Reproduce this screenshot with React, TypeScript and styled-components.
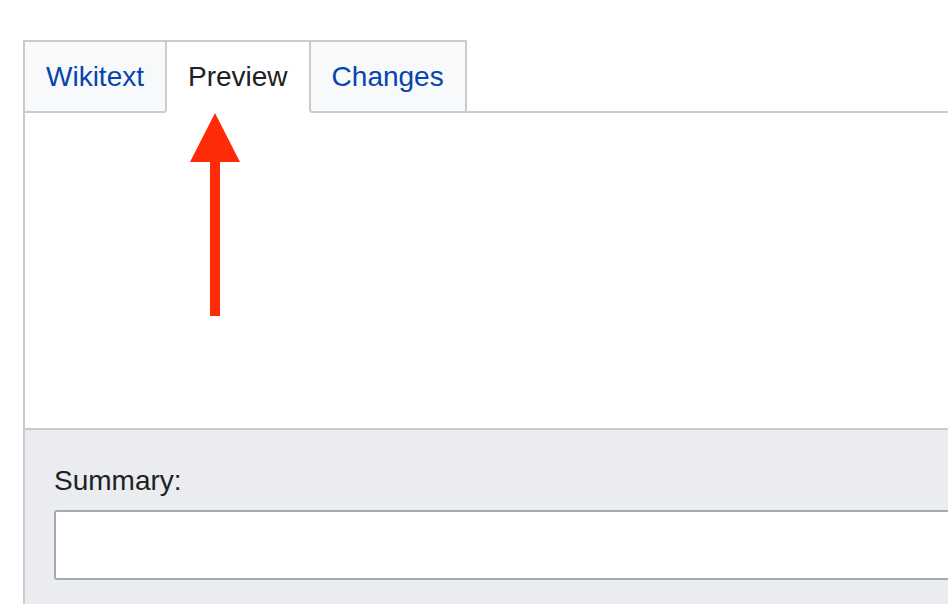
import React from "react";
import styled, { createGlobalStyle } from "styled-components";

const Global = createGlobalStyle`
  html, body {
    margin: 0;
    padding: 0;
    background: #ffffff;
    overflow: hidden;
  }
  body {
    font-family: "Liberation Sans", Arial, Helvetica, sans-serif;
  }
`;

const Page = styled.div`
  position: relative;
  width: 948px;
  height: 604px;
  overflow: hidden;
  padding: 40px 0 0 23px;
  box-sizing: border-box;
`;

const Editor = styled.div`
  width: 1000px;
  display: flex;
  flex-direction: column;
`;

const TabBar = styled.div`
  display: flex;
  align-items: stretch;
  height: 73px;
`;

const Tab = styled.div<{ $active?: boolean }>`
  box-sizing: border-box;
  height: 73px;
  padding: 0 21px;
  margin-left: -2px;
  &:first-child {
    margin-left: 0;
  }
  border: 2px solid #c8ccd1;
  border-bottom-color: ${(p) => (p.$active ? "#ffffff" : "#c8ccd1")};
  background: ${(p) => (p.$active ? "#ffffff" : "#f8f9fa")};
  color: ${(p) => (p.$active ? "#202122" : "#0645ad")};
  font-size: 28px;
  line-height: 69px;
  white-space: nowrap;
  position: relative;
  z-index: ${(p) => (p.$active ? 1 : 0)};
`;

const TabFiller = styled.div`
  flex: 1;
  border-bottom: 2px solid #c8ccd1;
`;

const Panel = styled.div`
  box-sizing: border-box;
  height: 317px;
  border-left: 2px solid #c8ccd1;
  border-bottom: 2px solid #c8ccd1;
  background: #ffffff;
`;

const Form = styled.div`
  box-sizing: border-box;
  border-left: 2px solid #c8ccd1;
  background: #eaecf0;
  padding: 31px 0 40px 29px;
  display: flex;
  flex-direction: column;
  gap: 9px;
  height: 200px;
`;

const Label = styled.label`
  font-size: 28px;
  line-height: 40px;
  color: #202122;
`;

const Input = styled.input`
  box-sizing: border-box;
  height: 70px;
  width: 100%;
  border: 2px solid #a2a9b1;
  border-radius: 3px;
  background: #ffffff;
  font: inherit;
  font-size: 28px;
  padding: 0 12px;
  outline: none;
`;

const Arrow = styled.svg`
  position: absolute;
  left: 188px;
  top: 110px;
  width: 54px;
  height: 210px;
  pointer-events: none;
`;

export default function App() {
  return (
    <>
      <Global />
      <Page>
        <Editor>
          <TabBar>
            <Tab>Wikitext</Tab>
            <Tab $active>Preview</Tab>
            <Tab>Changes</Tab>
            <TabFiller />
          </TabBar>
          <Panel />
          <Form>
            <Label htmlFor="summary">Summary:</Label>
            <Input id="summary" type="text" />
          </Form>
        </Editor>
        <Arrow viewBox="188 110 54 210">
          <polygon points="215,113 240,162 190,162" fill="#ff2b06" />
          <rect x="210" y="161" width="10" height="155" fill="#ff2b06" />
        </Arrow>
      </Page>
    </>
  );
}
